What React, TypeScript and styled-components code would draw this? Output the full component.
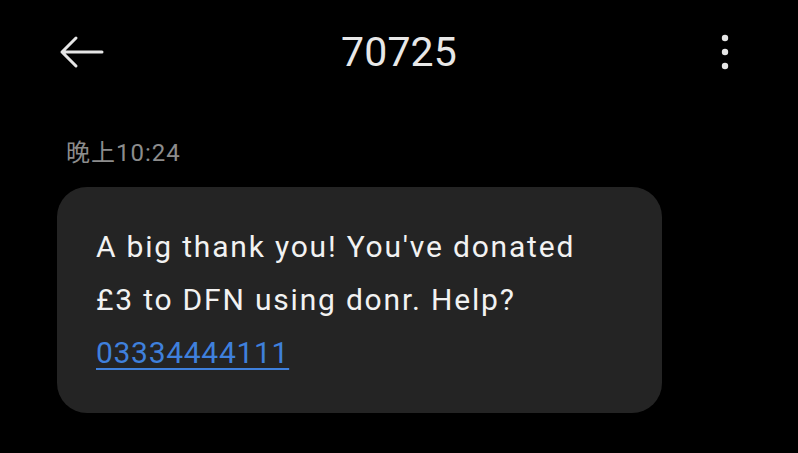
import * as React from 'react';
import styled, { createGlobalStyle } from 'styled-components';

const GlobalStyle = createGlobalStyle`
  html, body {
    margin: 0;
    padding: 0;
    background: #000;
  }
  body {
    font-family: Roboto, "Noto Sans CJK SC", sans-serif;
    -webkit-font-smoothing: antialiased;
  }
`;

// ========================
// Components
// ========================

const Screen = styled.div`
  width: 798px;
  height: 453px;
  background: #000;
  color: #fff;
  overflow: hidden;
`;

const Header = styled.header`
  display: grid;
  grid-template-columns: 1fr auto 1fr;
  align-items: center;
  height: 104px;
  padding: 0 56px;
  box-sizing: border-box;
`;

const IconButton = styled.button<{ align?: 'start' | 'end' }>`
  display: flex;
  justify-content: ${(p) => (p.align === 'end' ? 'flex-end' : 'flex-start')};
  align-items: center;
  background: transparent;
  border: 0;
  padding: 0 ${(p) => (p.align === 'end' ? '13px' : '0')} 0 0;
  color: #e6e6e6;
  cursor: pointer;
`;

const Title = styled.h1`
  margin: 0;
  text-align: center;
  font-family: Roboto, sans-serif;
  font-weight: 400;
  font-size: 41px;
  color: #e8e8e8;
  letter-spacing: 0.2px;
`;

const Thread = styled.main`
  display: flex;
  flex-direction: column;
  align-items: flex-start;
  padding: 35px 0 0 57px;
`;

const Timestamp = styled.div`
  font-family: Roboto, "Noto Sans CJK SC", sans-serif;
  font-size: 24px;
  letter-spacing: 1px;
  color: #8c8c8c;
  margin-left: 9px;
  margin-bottom: 20px;
  line-height: 28px;
`;

const Bubble = styled.div`
  width: 605px;
  height: 226px;
  box-sizing: border-box;
  background: #242424;
  border-radius: 30px;
  padding: 33px 30px 0 39px;
`;

const MessageText = styled.p`
  margin: 0;
  font-family: Roboto, sans-serif;
  font-size: 30px;
  letter-spacing: 1.8px;
  line-height: 53px;
  color: #f2f2f2;
`;

const PhoneLink = styled.a`
  color: #3f80dc;
  text-decoration: underline;
  text-underline-offset: 5px;
  text-decoration-thickness: 2px;
  letter-spacing: 0.7px;
`;

const BackArrow = () => (
  <svg width="48" height="34" viewBox="0 0 48 34" fill="none">
    <path
      d="M46 17H6M20 3L6 17L20 31"
      stroke="currentColor"
      strokeWidth="3"
      strokeLinecap="round"
      strokeLinejoin="round"
    />
  </svg>
);

const MoreDots = () => (
  <svg width="8" height="36" viewBox="0 0 8 36">
    <circle cx="4" cy="4" r="3.2" fill="currentColor" />
    <circle cx="4" cy="18" r="3.2" fill="currentColor" />
    <circle cx="4" cy="32" r="3.2" fill="currentColor" />
  </svg>
);

export default function App() {
  return (
    <Screen>
      <GlobalStyle />
      <Header>
        <IconButton aria-label="Back">
          <BackArrow />
        </IconButton>
        <Title>70725</Title>
        <IconButton align="end" aria-label="More">
          <MoreDots />
        </IconButton>
      </Header>
      <Thread>
        <Timestamp>晚上10:24</Timestamp>
        <Bubble>
          <MessageText>
            A big thank you! You've donated
            <br />
            £3 to DFN using donr. Help?
            <br />
            <PhoneLink href="#">03334444111</PhoneLink>
          </MessageText>
        </Bubble>
      </Thread>
    </Screen>
  );
}
